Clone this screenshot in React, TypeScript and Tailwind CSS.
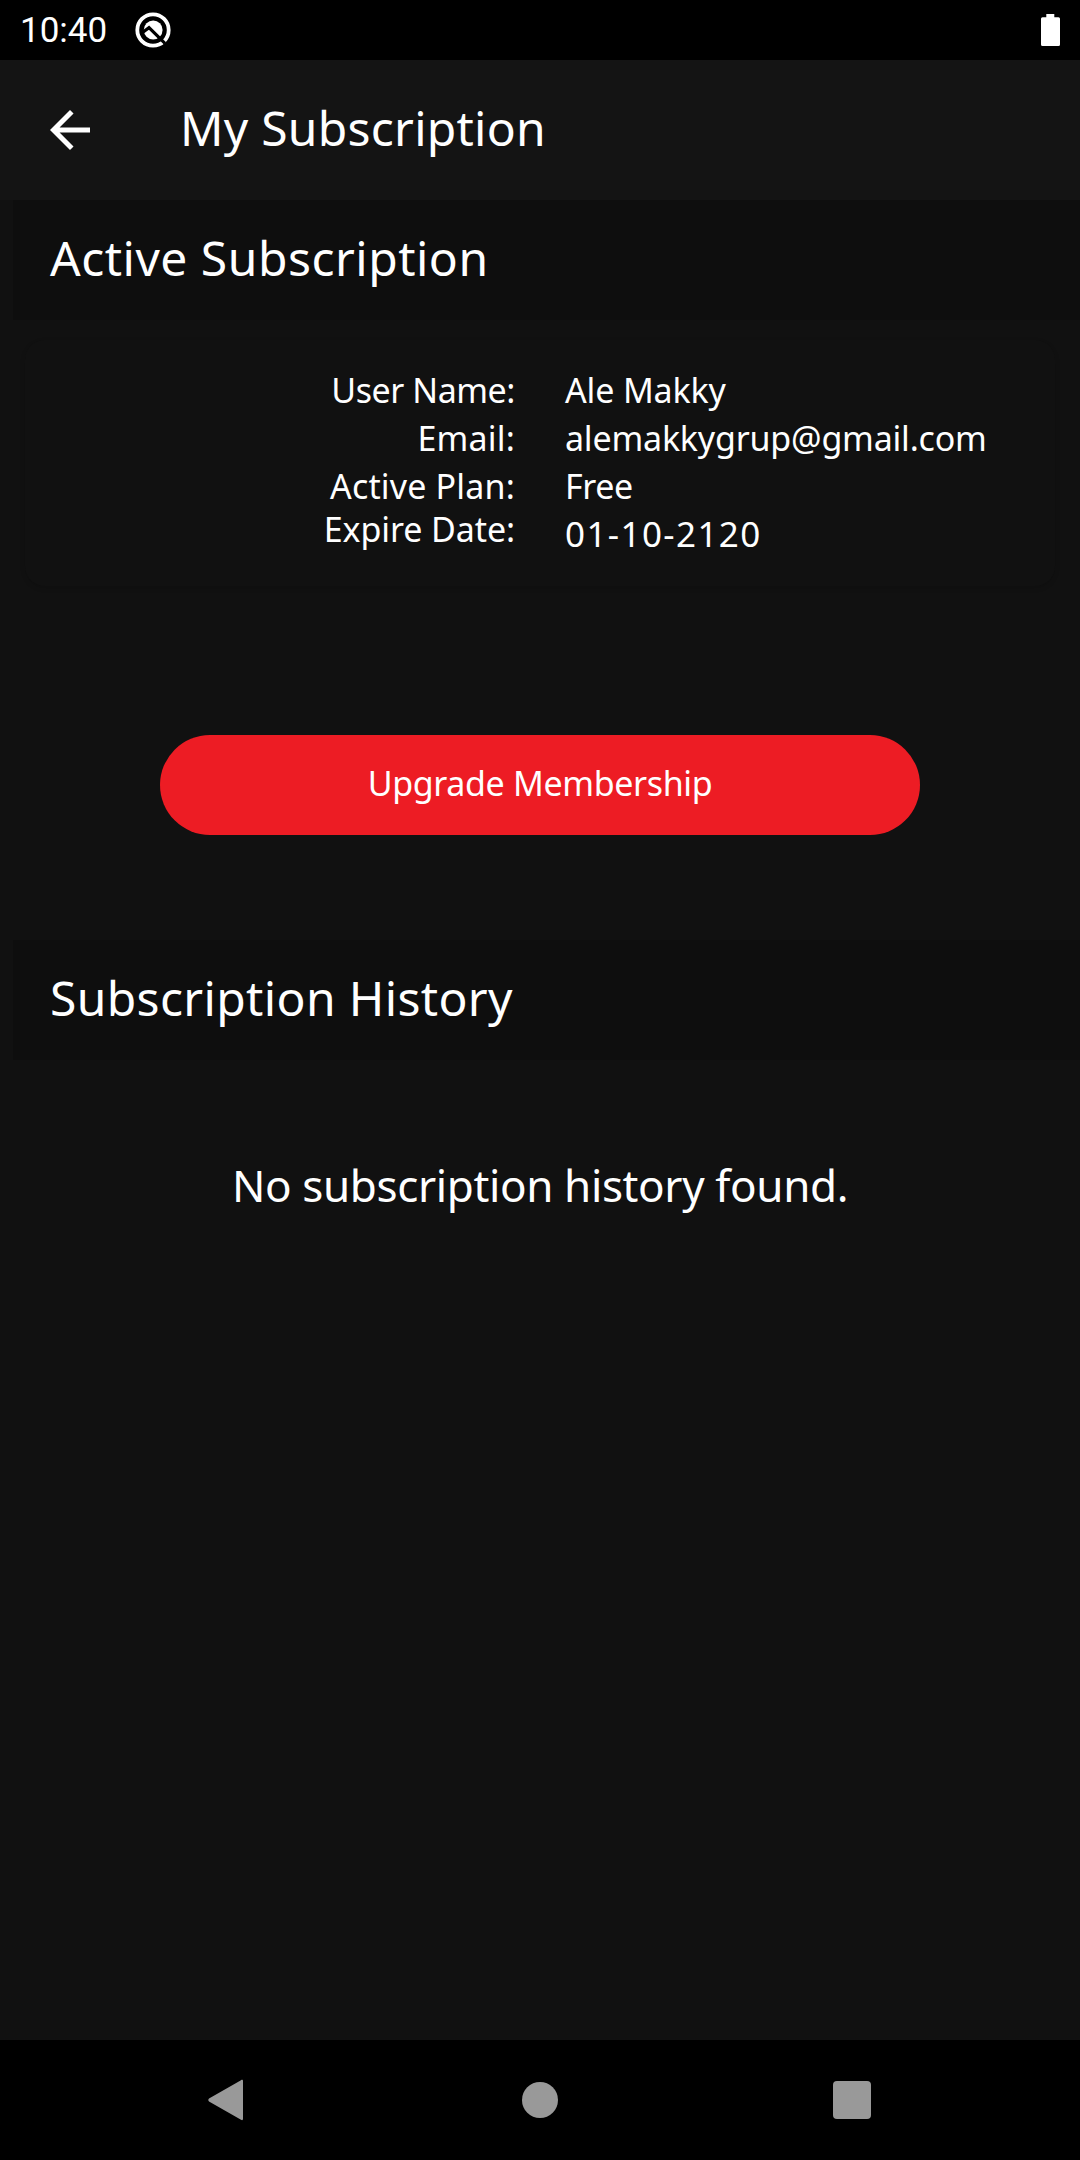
import React from "react";

const details = [
  {
    label: "User Name:",
    value: "Ale Makky",
    labelStyle: "leading-[48px] tracking-[-0.45px]",
    valueStyle: "tracking-[-0.15px]",
  },
  {
    label: "Email:",
    value: "alemakkygrup@gmail.com",
    labelStyle: "leading-[48px] tracking-[0.2px]",
    valueStyle: "tracking-[-0.2px]",
  },
  {
    label: "Active Plan:",
    value: "Free",
    labelStyle: "leading-[48px] tracking-[0.17px]",
    valueStyle: "tracking-[-0.4px]",
  },
  {
    label: "Expire Date:",
    value: "01-10-2120",
    labelStyle: "leading-[38px] tracking-[-0.1px]",
    valueStyle: "text-[35px] tracking-[1.4px]",
  },
];

function StatusBar() {
  return (
    <div className="flex h-[60px] items-center justify-between bg-black pl-5 pr-5">
      <div className="flex items-center gap-[27px]">
        <span className="w-[88px] whitespace-nowrap pt-0.5 font-[Roboto,sans-serif] text-[35px] leading-[60px] text-white">
          10:40
        </span>
        <svg width="36" height="36" viewBox="0 0 36 36" fill="none">
          <circle cx="18" cy="18" r="15.7" stroke="#fff" strokeWidth="3.8" />
          <circle cx="18.200" cy="18" r="9.400" fill="#fff" />
          <path d="M7.500 20.500L14 15.700L30 31.300" stroke="#000" strokeWidth="3.200" />
        </svg>
      </div>
      <svg width="19" height="32" viewBox="0 0 19 32">
        <path
          d="M5.3 0h8v3.2h4.2A1.5 1.5 0 0 1 19 4.700V30.500A1.500 1.500 0 0 1 17.500 32H1.500A1.500 1.500 0 0 1 0 30.500V4.700A1.500 1.500 0 0 1 1.500 3.200H5.300z"
          fill="#fff"
        />
      </svg>
    </div>
  );
}

function SectionTitle({ title, className }: { title: string; className: string }) {
  return (
    <div className="ml-[13px] flex h-[120px] items-center bg-[#0e0e0e] pb-[5px] pl-[37px]">
      <h2 className={`whitespace-nowrap text-5xl font-[450] ${className}`}>{title}</h2>
    </div>
  );
}

function NavigationBar() {
  return (
    <div className="flex h-[120px] items-center bg-black pl-[207px] text-[#999]">
      <svg width="37" height="42" viewBox="0 0 37 42" fill="currentColor">
        <path d="M34 1.300C35.200 .4 36 .9 36 2.200V39.800C36 41.100 35.200 41.600 34 40.700L2 22.500Q.3 21 2 19.500z" />
      </svg>
      <div className="ml-[278px] h-9 w-9 rounded-full bg-[#999]" />
      <div className="ml-[275px] h-[38px] w-[38px] rounded-[4px] bg-[#999]" />
    </div>
  );
}

function App() {
  return (
    <div className="flex h-[2160px] w-[1080px] flex-col overflow-hidden bg-[#111] font-['Noto_Sans',sans-serif] text-white">
      <StatusBar />
      <header className="flex h-[140px] items-center bg-[#141414] pl-10">
        <button type="button" aria-label="Back">
          <svg width="60" height="60" viewBox="0 0 24 24" fill="currentColor">
            <path d="M20 11H7.830l5.590-5.590L12 4l-8 8 8 8 1.410-1.410L7.830 13H20v-2z" />
          </svg>
        </button>
        <h1 className="ml-20 whitespace-nowrap pb-[5px] text-5xl font-[450] tracking-[0.25px]">
          My Subscription
        </h1>
      </header>

      <main className="flex-1">
        <SectionTitle title="Active Subscription" className="tracking-[0.5px]" />
        <div className="mx-[25px] mt-5 flex h-[246px] rounded-[20px] bg-[#111] pt-[26px] text-[34px] font-[450] shadow-[0_2px_5px_rgba(0,0,0,0.15)]">
          <div className="flex w-[490px] flex-col text-right">
            {details.map((item) => (
              <span key={item.label} className={item.labelStyle}>
                {item.label}
              </span>
            ))}
          </div>
          <div className="ml-[50px] flex flex-col">
            {details.map((item) => (
              <span key={item.label} className={`h-12 leading-[48px] ${item.valueStyle}`}>
                {item.value}
              </span>
            ))}
          </div>
        </div>

        <button
          type="button"
          className="mx-auto mb-[105px] mt-[149px] flex h-[100px] w-[760px] items-center justify-center rounded-full bg-[#ed1c24] pb-1 text-[34px] font-[450] tracking-[-0.35px]"
        >
          Upgrade Membership
        </button>

        <SectionTitle title="Subscription History" className="tracking-[0.35px]" />
        <p className="mt-[95px] text-center text-[44px] font-[450] leading-[60px] tracking-[-0.37px]">
          No subscription history found.
        </p>
      </main>

      <NavigationBar />
    </div>
  );
}

export default App;
